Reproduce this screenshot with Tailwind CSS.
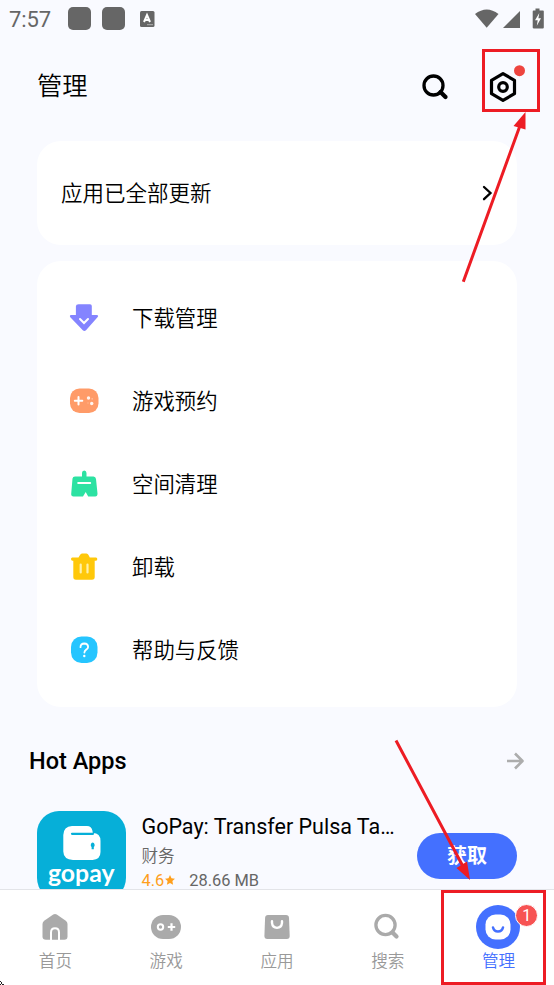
<!DOCTYPE html>
<html lang="zh-CN">
<head>
<meta charset="utf-8">
<title>管理</title>
<script src="https://cdn.jsdelivr.net/npm/@tailwindcss/browser@4"></script>
</head>
<body class="bg-[#f9faff] font-[Roboto,'Noto_Sans_CJK_SC',sans-serif] text-black">
<div class="relative flex h-[985px] w-[554px] flex-col overflow-hidden">

  <!-- Status bar -->
  <header class="flex h-[38px] shrink-0 items-center pl-[9px] pr-[10px] text-[#666]">
    <span class="mt-[2px] w-[59px] text-[22px] leading-none tracking-[-0.1px]">7:57</span>
    <span class="mt-[-1px] size-[23px] rounded-[5px] bg-[#666]"></span>
    <span class="ml-[11px] mt-[-1px] size-[23px] rounded-[5px] bg-[#666]"></span>
    <svg class="ml-[15px] mt-[-1px]" width="15" height="16" viewBox="0 0 15 16"><rect width="14.5" height="16" rx="1.5" fill="#666"/><path d="M4 11 7 4 10 11M5 9h4" fill="none" stroke="#fff" stroke-width="2"/><path d="M7.5 13.7h1m1 0h1m1 0h1" stroke="#fff"/></svg>
    <svg class="ml-auto" width="70" height="22" viewBox="0 0 70 22" fill="#666">
      <path d="M1 6Q12.700-3.200 24.500 6L12.700 19.800Z"/>
      <path d="M46 3V20H29Z"/>
      <path d="M61.500 .5h4v2H69q.8 0 .8.800V19.500q0 1-1 1H60q-1.300 0-1.300-1V3.500q0-1 .9-1h1.900Z"/>
      <path d="M65.300 5 61 12.200h2.700L62.800 17.800 67 10.300h-2.600Z" fill="#fff"/>
    </svg>
  </header>

  <!-- Title bar -->
  <div class="flex h-[103px] shrink-0 items-start pl-[37px] pr-[28px]">
    <h1 class="mt-[31px] flex-1 text-[25.300px] font-[350] leading-[36px]">管理</h1>
    <svg class="mt-[35px]" width="28" height="28" viewBox="0 0 28 28" fill="none" stroke="#000"><circle cx="12.500" cy="12.500" r="9.500" stroke-width="3.300"/><path d="m19.500 19 5 5" stroke-width="4.300" stroke-linecap="round"/></svg>
    <svg class="ml-[39px] mt-[25px]" width="38" height="42" viewBox="0 0 38 42"><path d="M15 10.700 26.500 17.300V30.700L15 37.300 3.500 30.700V17.300Z" fill="none" stroke="#000" stroke-width="3.200" stroke-linejoin="round"/><circle cx="15" cy="24" r="4.300" fill="none" stroke="#000" stroke-width="3.200"/><circle cx="31.500" cy="7.700" r="5.500" fill="#ee443f"/></svg>
  </div>

  <!-- Update status -->
  <section class="mx-[37px] flex h-[104px] shrink-0 items-center justify-between rounded-[24px] bg-white pl-[24px] pr-[24px] text-[21.500px] font-[350]">
    <span class="pt-[3px]">应用已全部更新</span>
    <svg width="11" height="16" viewBox="0 0 11 16" fill="none" stroke="#000" stroke-width="2.300" stroke-linecap="round"><path d="m2 2 6.500 6L2 14.200"/></svg>
  </section>

  <!-- Menu -->
  <nav class="mx-[37px] mt-[16px] flex h-[446px] shrink-0 flex-col rounded-[24px] bg-white pt-[15px] text-[21.400px] font-[350]">
    <div class="flex h-[83px] items-center gap-[33px] pl-[32px]">
      <svg width="30" height="30" viewBox="0 0 30 30"><path d="M9.500 1.200h11.500q1.800 0 1.800 1.800V12h4.700q2.700.2 1 2.300L17 27.200q-1.600 1.500-3.200 0L1.300 14.300q-1.200-2.100.9-2.300h4.700V3.200q0-2 2.600-2Z" fill="#8484ff"/><path d="m11 16 4 4 4-4" fill="none" stroke="#fff" stroke-width="2" stroke-linecap="round"/></svg>
      <span class="pt-[4px]">下载管理</span>
    </div>
    <div class="flex h-[83px] items-center gap-[33px] pl-[32px]">
      <svg width="30" height="30" viewBox="0 0 30 30"><rect x="1" y="2.500" width="28.500" height="24.500" rx="9.500" fill="#ff9b68"/><path d="M9.500 11v7.500M5.800 14.700h7.500" stroke="#fff" stroke-width="2" stroke-linecap="round"/><circle cx="19.500" cy="12" r="1.700" fill="#fff" opacity=".9"/><circle cx="22.700" cy="17.500" r="1.700" fill="#fff" opacity=".9"/><circle cx="23.200" cy="12.800" r=".9" fill="#fff" opacity=".35"/><circle cx="19" cy="17" r=".8" fill="#fff" opacity=".25"/></svg>
      <span class="pt-[4px]">游戏预约</span>
    </div>
    <div class="flex h-[83px] items-center gap-[33px] pl-[32px]">
      <svg width="30" height="30" viewBox="0 0 30 30"><path d="M13 7.500V4q0-2.500 2.200-2.500t2.300 2.500V7.500h7q2.200.2 2.500 2.500L28.500 24.500q.1 3-2.300 3H19.200L16.700 23 14 27.500H4.500q-2.500-.2-2.300-2.500L3.500 9.500q.3-2 2.500-2Z" fill="#2ce2a2"/><path d="M9.200 14h12" stroke="#fff" stroke-width="2" stroke-linecap="round"/></svg>
      <span class="pt-[4px]">空间清理</span>
    </div>
    <div class="flex h-[83px] items-center gap-[33px] pl-[32px]">
      <svg width="30" height="30" viewBox="0 0 30 30"><path d="M9.500 5.500 11 3Q11.700 1.500 13 1.500h4.500q1.300 0 2 1.500L20.800 5.500H27q1.300 0 1.300 1.500T27 8.700h-1.300V25q0 2.700-2.700 2.700H7q-2.700 0-2.700-2.700V8.700H3.500Q2 8.700 2 7T3.500 5.500Z" fill="#ffc80a"/><path d="M11.700 12.500v8M18.500 12.500v8" stroke="#fff1a8" stroke-width="2.200" stroke-linecap="round"/></svg>
      <span class="pt-[4px]">卸载</span>
    </div>
    <div class="flex h-[83px] items-center gap-[33px] pl-[32px]">
      <svg width="30" height="30" viewBox="0 0 30 30"><rect x="2" y="1.500" width="26.500" height="26.500" rx="10.500" fill="#26c5ff"/><path d="M11.500 12.200q0-3.600 3.800-3.700 3.800.2 3.800 3.400c0 2.700-3.700 2.600-3.700 5.600" fill="none" stroke="#fff" stroke-width="1.800" stroke-linecap="round"/><circle cx="15.300" cy="21" r="1.200" fill="#fff"/></svg>
      <span class="pt-[4px]">帮助与反馈</span>
    </div>
  </nav>

  <!-- Hot apps -->
  <section class="h-[182px] shrink-0 overflow-hidden">
    <div class="mt-[38px] flex h-[32px] items-center justify-between pl-[29px] pr-[29px]">
      <h2 class="pt-[2px] text-[23.500px] font-medium leading-none">Hot Apps</h2>
      <svg width="19" height="18" viewBox="0 0 19 18" fill="none" stroke="#adadad" stroke-width="2.600"><path d="M1 9h15.500M9 1.500 16.500 9 9 16.500" stroke-linejoin="round"/></svg>
    </div>
    <div class="mt-[34px] flex items-start pl-[37px] pr-[37px]">
      <svg class="shrink-0" width="89" height="89" viewBox="0 0 89 89">
        <rect width="89" height="89" rx="22" fill="#06afd8"/>
        <path d="M35 15h15q4.500 0 5.500 5l.3 2q7.700.2 7.700 8V41q0 7.500-8 8H36q-9.500-.5-9.700-8.500V24Q26.500 15.500 35 15Z" fill="#fff"/>
        <path d="M35 22.800h21" stroke="#06afd8" stroke-width="2.200" stroke-linecap="round"/>
        <path d="M55.700 31.500a2.300 2.600 0 0 1 1.100 4.600v2.100h-2.200v-2.100a2.300 2.600 0 0 1 1.100-4.600Z" fill="#06afd8"/>
        <text x="11" y="71" textLength="66.500" lengthAdjust="spacingAndGlyphs" font-family="Lato" font-weight="700" font-size="25" fill="#fff">gopay</text>
      </svg>
      <div class="ml-[15.500px] w-[275.500px] shrink-0">
        <h3 class="mt-[2px] whitespace-nowrap text-[21.500px] leading-[28px]">GoPay: Transfer Pulsa Ta…</h3>
        <p class="mt-[3px] text-[16.600px] font-[350] leading-[26px] text-[#666]">财务</p>
        <div class="-mt-px flex h-[20px] items-center pt-[3px] text-[16.400px] leading-[18px]">
          <span class="text-[#ff9f1c]">4.6</span>
          <svg class="mb-[1px] ml-px" width="10" height="10" viewBox="0 0 10 10"><path d="m5 0 1.500 3.300 3.500.4-2.600 2.400.7 3.600L5 7.900 1.900 9.700l.7-3.600L0 3.700l3.500-.4Z" fill="#ff9f1c"/></svg>
          <span class="ml-[14px] text-[#666]">28.66 MB</span>
        </div>
      </div>
      <button class="mt-[22px] h-[46px] w-[100px] shrink-0 rounded-full bg-[#4470ff] text-[20px] font-bold leading-none text-white">获取</button>
    </div>
  </section>

  <!-- Tab bar -->
  <footer class="grid h-[96px] shrink-0 grid-cols-5 border-t border-[#e3e4e8] bg-white text-[16.600px] leading-[24px] text-[#999]">
    <div class="flex flex-col items-center pt-[21px]">
      <svg width="32" height="32" viewBox="0 0 32 32"><path d="M14.200 3.500q1.800-1.200 3.600 0l9 6.200q1.700 1.300 1.700 3.300v12.500q0 3.300-3.300 3.300H7q-3.500 0-3.500-3.300V13q0-2 1.700-3.300Z" fill="#aaa"/><path d="M12 29V21.500q0-4.300 4-4.300t4 4.300V29" fill="none" stroke="#fff" stroke-width="2"/></svg>
      <span class="mt-[7px] font-[350]">首页</span>
    </div>
    <div class="flex flex-col items-center pt-[21px]">
      <svg width="32" height="32" viewBox="0 0 32 32"><rect x="1" y="4" width="30" height="24" rx="12" fill="#aaa"/><circle cx="10.500" cy="16" r="2.700" fill="none" stroke="#fff" stroke-width="2"/><path d="M21.500 12.300v7.400M17.800 16h7.400" stroke="#fff" stroke-width="2.200"/></svg>
      <span class="mt-[7px] font-[350]">游戏</span>
    </div>
    <div class="flex flex-col items-center pt-[21px]">
      <svg width="32" height="32" viewBox="0 0 32 32"><path d="M7 4h18q2.800 0 3 2.800l.7 18.200q0 2.900-2.900 2.900H6.300q-2.900 0-2.900-2.900L4.100 6.800Q4.300 4 7 4Z" fill="#aaa"/><path d="M11 10.200v1.700q.5 4.800 5 5 4.500-.2 5-5v-1.700" fill="none" stroke="#fff" stroke-width="2.400" stroke-linecap="round"/></svg>
      <span class="mt-[7px] font-[350]">应用</span>
    </div>
    <div class="flex flex-col items-center pt-[21px]">
      <svg width="32" height="32" viewBox="0 0 32 32" fill="none" stroke="#aaa"><circle cx="13.500" cy="14" r="9.600" stroke-width="3.300"/><path d="m20.500 21.500 4 4" stroke-width="4.200" stroke-linecap="round"/></svg>
      <span class="mt-[7px] font-[350]">搜索</span>
    </div>
    <div class="relative flex flex-col items-center pt-[15px] text-[#4470ff]">
      <svg class="mr-[2px]" width="44" height="44" viewBox="0 0 44 44"><circle cx="22" cy="22" r="22" fill="#4470ff"/><rect x="9.500" y="9.500" width="25" height="25" rx="10" fill="#fff"/><path d="M17 22.500q1 4 5 4t5-4" fill="none" stroke="#4470ff" stroke-width="2.500" stroke-linecap="round"/></svg>
      <span class="mt-px font-[350]">管理</span>
      <span class="absolute left-[72px] top-[14px] flex size-[23px] items-center justify-center rounded-full border border-white bg-[#f75353] text-[16px] leading-none text-white">1</span>
    </div>
  </footer>

  <!-- Annotations -->
  <svg class="pointer-events-none absolute inset-0" width="554" height="985" viewBox="0 0 554 985">
    <g fill="none" stroke="#ed1c24" stroke-width="3">
      <rect x="483.500" y="50.500" width="55" height="60"/>
      <rect x="442.500" y="891.500" width="102" height="92"/>
      <path d="M463.300 281.700 519.500 127M396 740.500l66.500 125"/>
    </g>
    <path d="M525.500 112V129.500L513.500 126ZM470 880 456.500 868 467 861.500Z" fill="#ed1c24"/>
    <path d="M0 981.500h1m0 1h1m-1 1h1m0 1h2M0 984.500h1" fill="none" stroke="#222"/>
  </svg>
</div>
</body>
</html>
